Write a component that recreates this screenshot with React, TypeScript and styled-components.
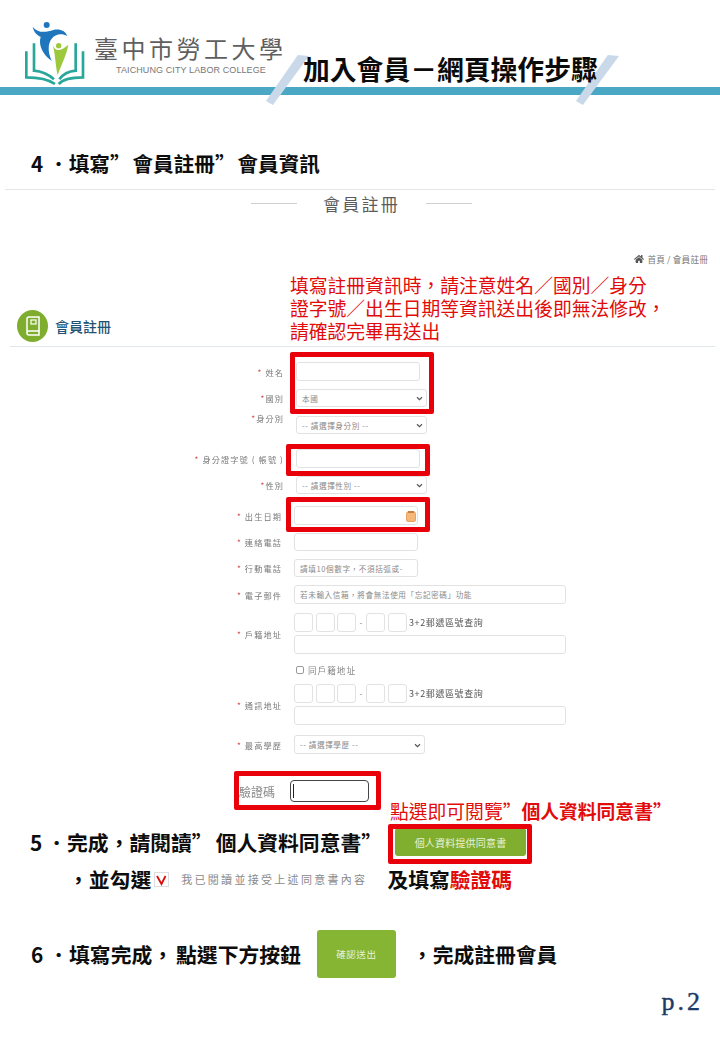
import React from 'react';
import styled, { createGlobalStyle } from 'styled-components';
import { FaHome } from 'react-icons/fa';

const CJK = `"Noto Sans CJK TC", "Noto Sans", sans-serif`;

const GlobalStyle = createGlobalStyle`
  html, body { margin: 0; padding: 0; background: #fff; }
  * { box-sizing: border-box; }
`;

const Slide = styled.div`
  position: relative;
  width: 720px;
  height: 1040px;
  overflow: hidden;
  background: #fff;
  font-family: ${CJK};
  color: #111;
`;

const Header = styled.header`
  display: flex;
  height: 87px;
`;

const LogoMark = styled.svg`
  width: 100px;
  height: 85px;
  margin: 10px 0 0 10px;
  flex: none;
`;

const Brand = styled.div`
  margin: 31px 0 0 -15px;
  width: 208px;
  flex: none;
`;

const BrandName = styled.div`
  margin-left: -1px;
  font-size: 24px;
  line-height: 34px;
  letter-spacing: 3.5px;
  color: #5f5f5f;
  font-weight: 400;
  white-space: nowrap;
`;

const BrandEnglish = styled.div`
  font-family: "Liberation Sans", sans-serif;
  font-size: 9px;
  line-height: 10px;
  margin: 0 0 0 21px;
  color: #777;
  white-space: nowrap;
  letter-spacing: 0.1px;
`;

const PageTitle = styled.h1`
  position: relative;
  z-index: 1;
  margin: 50px 0 0 0;
  font-size: 26.8px;
  line-height: 38px;
  font-weight: 700;
  color: #0b0b0b;
  white-space: nowrap;
  height: 38px;
`;

const Band = styled.div`
  height: 8px;
  background: #4aa8c5;
`;

const Slash = styled.i<{ $left: number }>`
  position: absolute;
  top: 55px;
  left: ${p => p.$left}px;
  width: 43px;
  height: 50px;
  background: #c9d9ea;
  clip-path: polygon(0 92%, 74% 0, 100% 2%, 16% 100%);
`;

const StepHeading = styled.h2`
  margin: 53px 0 0 31px;
  font-size: 20.6px;
  line-height: 30px;
  font-weight: 700;
  color: #0d0d0d;
  white-space: nowrap;
`;

// a little extra room around the number dot and the quote marks
const Kern = styled.span<{ $w: number }>`
  margin-right: ${p => p.$w}px;
`;

const Divider = styled.div`
  height: 1px;
  margin: 11px 5px 0;
  background: #e6e6e6;
`;

const SectionTitle = styled.div`
  display: flex;
  align-items: center;
  justify-content: center;
  gap: 26px;
  height: 28px;
  padding: 0 0 2px 3px;
  font-size: 17px;
  letter-spacing: 2.2px;
  color: #5c5c5c;
  font-weight: 400;

  &::before, &::after {
    content: '';
    width: 46px;
    height: 1px;
    background: #cfcfcf;
  }
`;

const Breadcrumb = styled.div`
  display: flex;
  justify-content: flex-end;
  align-items: center;
  gap: 3px;
  margin: 35px 12px 0 0;
  height: 12px;
  font-size: 8.6px;
  letter-spacing: 0.2px;
  color: #777;

  svg { color: #555; font-size: 10px; }
`;

const TitleRow = styled.div`
  display: flex;
  align-items: flex-end;
  height: 82px;
  margin: 0 5px 0 10px;
  padding: 0 0 4px 7px;
  border-bottom: 1px solid #dfe7ea;
`;

const TitleBadge = styled.div`
  width: 31px;
  height: 32px;
  border-radius: 50%;
  background: #7fae2e;
  display: flex;
  align-items: center;
  justify-content: center;
  flex: none;
`;

const TitleLabel = styled.div`
  margin: 0 0 7px 7px;
  font-size: 14px;
  line-height: 18px;
  color: #1f5273;
  font-weight: 500;
  white-space: nowrap;
`;

const TitleNote = styled.div`
  margin: 0 0 0 179px;
  width: 385px;
  font-size: 18.8px;
  line-height: 23px;
  color: #e20b0b;
`;

const Form = styled.div`
  display: flex;
  flex-direction: column;
  filter: blur(0.3px);
`;

const Row = styled.div<{ $gap: number; $align?: string }>`
  display: grid;
  grid-template-columns: 284px 1fr;
  column-gap: 10px;
  margin-top: ${p => p.$gap}px;
  align-items: ${p => p.$align ?? 'center'};
`;

const Label = styled.div<{ $nudge?: number; $up?: number }>`
  text-align: right;
  font-size: 8.2px;
  line-height: 12px;
  letter-spacing: 1.1px;
  color: #7b7b7b;
  white-space: nowrap;
  transform: translate(${p => p.$nudge ?? 0}px, ${p => -(p.$up ?? 0)}px);

  b { color: #d9534f; font-weight: 400; }
`;

const Field = styled.div<{ $w: number; $h?: number; $x?: number }>`
  position: relative;
  width: ${p => p.$w}px;
  height: ${p => p.$h ?? 19}px;
  margin-left: ${p => p.$x ?? 0}px;
  display: flex;
  align-items: center;
  padding: 0 5px;
  border: 1px solid #e2e2e2;
  border-radius: 3px;
  background: #fff;
  font-size: 7.6px;
  letter-spacing: 0.6px;
  color: #8a8a8a;
  white-space: nowrap;
`;

const Caret = styled.svg`
  position: absolute;
  right: 3px;
  top: 50%;
  width: 7px;
  height: 5px;
  margin-top: -2px;
`;

const CalendarIcon = styled.svg`
  position: absolute;
  right: 1px;
  top: 4px;
  width: 10px;
  height: 11px;
`;

const Stack = styled.div`
  display: flex;
  flex-direction: column;
  gap: 3px;
`;

const ZipRow = styled.div`
  display: flex;
  align-items: center;
  gap: 2.5px;
`;

const ZipBox = styled.div`
  width: 19px;
  height: 19px;
  border: 1px solid #e2e2e2;
  border-radius: 3px;
`;

const ZipDash = styled.span`
  width: 5px;
  text-align: center;
  font-size: 8px;
  color: #777;
`;

const ZipHint = styled.span`
  font-size: 9px;
  letter-spacing: 0.6px;
  color: #555;
  white-space: nowrap;
`;

const SameAddress = styled.label`
  display: flex;
  align-items: center;
  gap: 4px;
  margin-left: 2px;
  height: 12px;
  font-size: 8.6px;
  letter-spacing: 1px;
  color: #888;
`;

const SmallBox = styled.span`
  width: 8px;
  height: 8px;
  border: 1px solid #999;
  border-radius: 2px;
`;

const CaptchaRow = styled.div`
  display: flex;
  align-items: center;
  margin: 26px 0 0 239px;
  gap: 15px;
  font-size: 12px;
  color: #8a8a8a;
`;

const CaptchaInput = styled.div`
  width: 79px;
  height: 22px;
  border: 1px solid #444;
  border-radius: 4px;
  display: flex;
  align-items: center;
  padding-left: 2px;

  &::before {
    content: '';
    width: 1px;
    height: 14px;
    background: #222;
  }
`;

const Note = styled.div`
  margin: -2px 0 0 390px;
  height: 21px;
  font-size: 18.8px;
  line-height: 21px;
  color: #e20b0b;
  white-space: nowrap;

  strong { font-weight: 700; }
`;

const Line = styled.div<{ $x: number; $gap: number }>`
  display: flex;
  align-items: center;
  margin: ${p => p.$gap}px 0 0 ${p => p.$x}px;
  font-size: 20.8px;
  font-weight: 700;
  color: #0d0d0d;
  white-space: nowrap;

  em { font-style: normal; color: #e20b0b; }
`;

const Spaced = styled.span<{ $w: number }>`
  display: inline-block;
  width: ${p => p.$w}px;
  flex: none;
`;

const AgreeButton = styled.div`
  width: 131px;
  height: 28px;
  background: #80ae2f;
  border-radius: 3px;
  display: flex;
  align-items: center;
  justify-content: center;
  font-size: 10px;
  font-weight: 400;
  letter-spacing: 0.2px;
  color: #e9f2d8;
`;

const TickBox = styled.svg`
  width: 15px;
  height: 15px;
  flex: none;
`;

const AgreeText = styled.span`
  font-size: 11px;
  font-weight: 400;
  letter-spacing: 2.3px;
  color: #8a8a8a;
`;

const SubmitButton = styled.div`
  width: 79px;
  height: 48px;
  background: #86b534;
  border-radius: 3px;
  display: flex;
  align-items: center;
  justify-content: center;
  font-size: 9.5px;
  font-weight: 400;
  letter-spacing: 0.6px;
  color: #e9f2d8;
`;

const PageNumber = styled.div`
  position: absolute;
  right: 17px;
  bottom: 24px;
  font-family: "Liberation Serif", serif;
  font-size: 26px;
  font-weight: 400;
  line-height: 28px;
  letter-spacing: 3px;
  color: #1d3a68;
  -webkit-text-stroke: 0.4px #1d3a68;
`;

const Highlight = styled.div<{ $x: number; $y: number; $w: number; $h: number }>`
  position: absolute;
  left: ${p => p.$x}px;
  top: ${p => p.$y}px;
  width: ${p => p.$w}px;
  height: ${p => p.$h}px;
  border: 5px solid #e8000b;
  border-radius: 2px;
  pointer-events: none;
`;

const ChevronDown = () => (
  <Caret viewBox="0 0 8 6">
    <path d="M1 1.5 4 4.5 7 1.5" fill="none" stroke="#555" strokeWidth="1.4" />
  </Caret>
);

const Zip = () => (
  <ZipRow>
    <ZipBox />
    <ZipBox />
    <ZipBox />
    <ZipDash>-</ZipDash>
    <ZipBox />
    <ZipBox />
    <ZipHint>3+2郵遞區號查詢</ZipHint>
  </ZipRow>
);

const App: React.FC = () => (
  <Slide lang="zh-Hant">
    <GlobalStyle />
    <Header>
      <LogoMark viewBox="0 0 300 255">
        <g fill="none" stroke="#2aa79b" strokeWidth="8">
          <path d="M49 124V202C85 202 112 206 135 222" />
          <path d="M72 100V182C96 184 116 194 132 208" />
          <path d="M219 124V202C184 202 160 206 146 222" />
          <path d="M197 100V182C174 184 158 194 148 208" />
        </g>
        <circle cx="110" cy="45" r="9" fill="#1f76bd" />
        <path
          d="M68 50C85 72 110 66 130 60 150 56 165 62 172 78 155 68 135 72 125 86 113 102 113 126 125 152 100 136 84 106 92 80 82 76 72 68 68 50Z"
          fill="#1f76bd"
        />
        <circle cx="146" cy="107" r="8" fill="#9cc83c" />
        <path d="M128 104C135 126 152 124 175 104 170 135 155 160 143 196 136 165 136 130 128 104Z" fill="#9cc83c" />
      </LogoMark>
      <Brand>
        <BrandName>臺中市勞工大學</BrandName>
        <BrandEnglish>TAICHUNG CITY LABOR COLLEGE</BrandEnglish>
      </Brand>
      <PageTitle>加入會員－網頁操作步驟</PageTitle>
    </Header>
    <Band />
    <Slash $left={266} />
    <Slash $left={576} />

    <StepHeading>
      <Kern $w={5}>4</Kern>．填寫<Kern $w={2}>”</Kern>會員註冊<Kern $w={2}>”</Kern>會員資訊
    </StepHeading>
    <Divider />
    <SectionTitle>會員註冊</SectionTitle>
    <Breadcrumb>
      <FaHome />
      首頁 / 會員註冊
    </Breadcrumb>
    <TitleRow>
      <TitleBadge>
        <svg width="16" height="20" viewBox="0 0 16 20">
          <path d="M2 3a2 2 0 0 1 2-2h10v14H4a2 2 0 0 0-2 2V3Z" fill="none" stroke="#fff" strokeWidth="1.5" />
          <path d="M2 17a2 2 0 0 0 2 2h10v-4" fill="none" stroke="#fff" strokeWidth="1.5" />
          <rect x="6" y="4" width="5" height="4" fill="none" stroke="#fff" strokeWidth="1.2" />
        </svg>
      </TitleBadge>
      <TitleLabel>會員註冊</TitleLabel>
      <TitleNote>
        填寫註冊資訊時，請注意姓名／國別／身分
        <br />
        證字號／出生日期等資訊送出後即無法修改，
        <br />
        請確認完畢再送出
      </TitleNote>
    </TitleRow>

    <Form>
      <Row $gap={15}>
        <Label><b>* </b>姓名</Label>
        <Field $w={124} $x={2} />
      </Row>
      <Row $gap={8}>
        <Label><b>*</b>國別</Label>
        <Field $w={131} $h={18} $x={2}>本國<ChevronDown /></Field>
      </Row>
      <Row $gap={9} $align="start">
        <Label $up={4}><b>*</b>身分別</Label>
        <Field $w={131} $h={18} $x={2}>-- 請選擇身分別 --<ChevronDown /></Field>
      </Row>
      <Row $gap={15}>
        <Label><b>* </b>身分證字號 ( 帳號 )</Label>
        <Field $w={124} $x={2} />
      </Row>
      <Row $gap={8}>
        <Label><b>*</b>性別</Label>
        <Field $w={131} $h={18} $x={2}>-- 請選擇性別 --<ChevronDown /></Field>
      </Row>
      <Row $gap={12}>
        <Label $nudge={-2}><b>* </b>出生日期</Label>
        <Field $w={124}>
          <CalendarIcon viewBox="0 0 10 11">
            <rect x="0.5" y="1" width="9" height="9.5" rx="1.5" fill="#f6b878" stroke="#e7a35f" />
            <rect x="2" y="0" width="6" height="2" fill="#c9803f" />
          </CalendarIcon>
        </Field>
      </Row>
      <Row $gap={8}>
        <Label $nudge={-2}><b>* </b>連絡電話</Label>
        <Field $w={124} $h={18} />
      </Row>
      <Row $gap={8}>
        <Label $nudge={-2}><b>* </b>行動電話</Label>
        <Field $w={124} $h={18}>請填10個數字，不須括弧或-</Field>
      </Row>
      <Row $gap={8}>
        <Label $nudge={-2}><b>* </b>電子郵件</Label>
        <Field $w={272}>若未輸入信箱，將會無法使用「忘記密碼」功能</Field>
      </Row>
      <Row $gap={9}>
        <Label $nudge={-2}><b>* </b>戶籍地址</Label>
        <Stack>
          <Zip />
          <Field $w={272} />
        </Stack>
      </Row>
      <Row $gap={10}>
        <span />
        <SameAddress><SmallBox />同戶籍地址</SameAddress>
      </Row>
      <Row $gap={8}>
        <Label $nudge={-2}><b>* </b>通訊地址</Label>
        <Stack>
          <Zip />
          <Field $w={272} />
        </Stack>
      </Row>
      <Row $gap={10}>
        <Label $nudge={-2}><b>* </b>最高學歷</Label>
        <Field $w={131}>-- 請選擇學歷 --<ChevronDown /></Field>
      </Row>
      <CaptchaRow>
        驗證碼
        <CaptchaInput />
      </CaptchaRow>
    </Form>

    <Note>點選即可閱覽”<strong>個人資料同意書”</strong></Note>
    <Line $x={30} $gap={6}>
      <Kern $w={4}>5</Kern>．完成，請閱讀<Kern $w={3}>”</Kern>個人資料同意書”
      <Spaced $w={13} />
      <AgreeButton>個人資料提供同意書</AgreeButton>
    </Line>
    <Line $x={68} $gap={7}>
      ，並勾選
      <Spaced $w={3} />
      <TickBox viewBox="0 0 15 15">
        <rect x="0.5" y="0.5" width="14" height="14" fill="#fff" stroke="#ddd" />
        <path d="M3 4 7.5 12 11.5 4" fill="none" stroke="#d80d0d" strokeWidth="1.8" />
      </TickBox>
      <Spaced $w={12} />
      <AgreeText>我已閱讀並接受上述同意書內容</AgreeText>
      <Spaced $w={20} />
      及填寫<em>驗證碼</em>
    </Line>
    <Line $x={31} $gap={36}>
      <Kern $w={5}>6</Kern>．填寫完成<Kern $w={3}>，</Kern>點選下方按鈕
      <Spaced $w={16} />
      <SubmitButton>確認送出</SubmitButton>
      <Spaced $w={16} />
      ，完成註冊會員
    </Line>
    <PageNumber>p.2</PageNumber>

    <Highlight $x={290} $y={352} $w={144} $h={62} />
    <Highlight $x={286} $y={444} $w={144} $h={32} />
    <Highlight $x={286} $y={497} $w={144} $h={35} />
    <Highlight $x={234} $y={771} $w={147} $h={39} />
    <Highlight $x={388} $y={824} $w={144} $h={40} />
  </Slide>
);

export default App;
